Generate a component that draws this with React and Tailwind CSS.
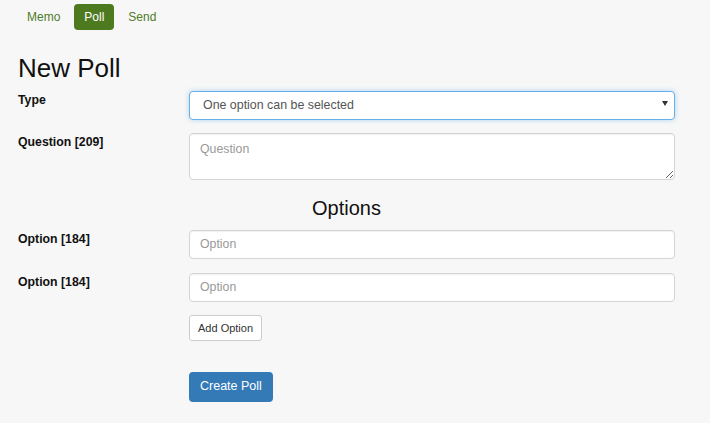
import React from 'react';

const navItems = ['Memo', 'Poll', 'Send'];

const Label = ({ children }) => (
  <div className="w-[171px] shrink-0 pt-[1px] text-[12.3px] font-bold leading-[16px] text-[#111]">{children}</div>
);

const inputCls =
  'w-full h-[29px] rounded-[4px] border border-[#d4d4d4] bg-white px-[10px] text-[12.3px] text-[#555] placeholder:text-[#999] shadow-[inset_0_1px_1px_rgba(0,0,0,0.06)] outline-none';

export default function App() {
  return (
    <div className="min-h-[423px] w-full bg-[#f7f7f7] font-['Liberation_Sans',Arial,sans-serif] text-[#222]">
      <div className="pl-[18px] pr-[35px]">
        <nav className="flex gap-[4px] pt-[4px] -ml-[1px]">
          {navItems.map((x) => (
            <span
              key={x}
              className={
                'h-[26px] px-[10px] rounded-[4px] text-[12px] leading-[26px] ' +
                (x === 'Poll' ? 'bg-[#4e7a1f] text-white' : 'text-[#4f7c2a]')
              }
            >
              {x}
            </span>
          ))}
        </nav>

        <h1 className="mt-[24px] text-[26px] leading-[1.1] text-[#111]">New Poll</h1>

        <div className="mt-[8px] flex">
          <Label>Type</Label>
          <div className="relative flex-1">
            <select className="w-full h-[29px] appearance-none rounded-[4px] border border-[#66afe9] bg-white pl-[13px] text-[12.4px] text-[#555] shadow-[0_0_5px_rgba(102,175,233,0.5)] outline-none">
              <option>One option can be selected</option>
            </select>
            <span className="pointer-events-none absolute right-[7px] top-[10px] h-0 w-0 border-x-[3px] border-t-[5px] border-x-transparent border-t-[#333]"></span>
          </div>
        </div>

        <div className="mt-[13px] flex">
          <Label>Question [209]</Label>
          <textarea
            placeholder="Question"
            className="flex-1 h-[47px] rounded-[4px] border border-[#d4d4d4] bg-white px-[10px] py-[6px] text-[12.3px] text-[#555] placeholder:text-[#999] shadow-[inset_0_1px_1px_rgba(0,0,0,0.06)] outline-none"
          />
        </div>

        <h2 className="mt-[17px] text-center text-[20px] leading-[22px] text-[#111]">Options</h2>

        <div className="mt-[11px] flex">
          <Label>Option [184]</Label>
          <div className="flex-1">
            <input placeholder="Option" className={inputCls} />
          </div>
        </div>

        <div className="mt-[14px] flex">
          <Label>Option [184]</Label>
          <div className="flex-1">
            <input placeholder="Option" className={inputCls} />
          </div>
        </div>

        <div className="ml-[171px] mt-[13px]">
          <button className="h-[26px] rounded-[3px] border border-[#ccc] bg-white px-[8px] text-[11px] text-[#333]">
            Add Option
          </button>
        </div>

        <div className="ml-[171px] mt-[31px]">
          <button className="h-[30px] rounded-[4px] bg-[#337ab7] px-[11px] text-[12.5px] text-white">
            Create Poll
          </button>
        </div>
      </div>
    </div>
  );
}
